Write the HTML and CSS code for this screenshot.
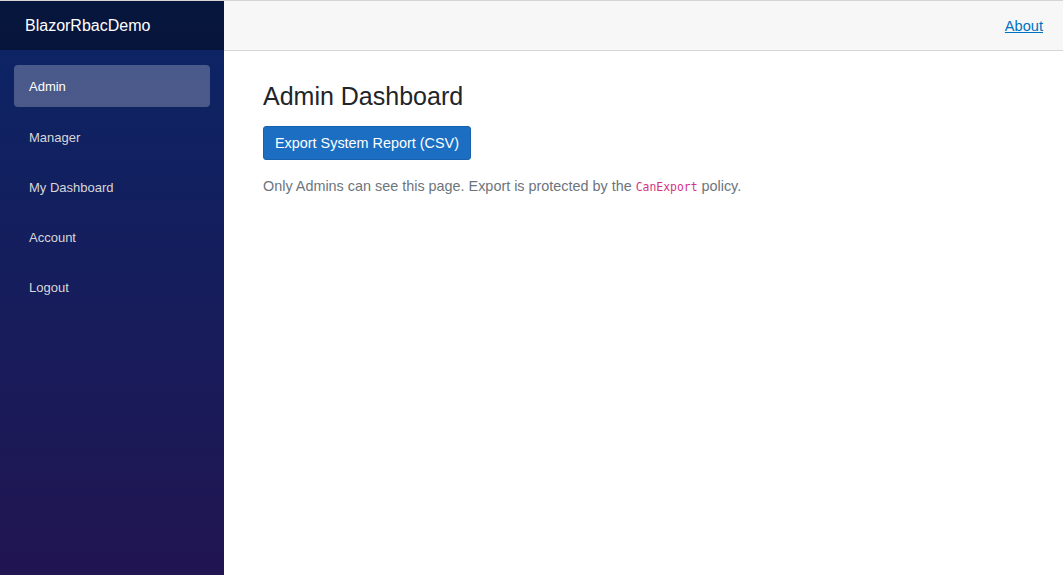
FILE: index.html
```html
<!DOCTYPE html>
<html lang="en">
<head>
<meta charset="utf-8">
<title>BlazorRbacDemo</title>
<link rel="stylesheet" href="styles.css">
</head>
<body>
<div class="page">
  <aside class="sidebar">
    <div class="brand-row"><span class="brand">BlazorRbacDemo</span></div>
    <nav class="nav">
      <a class="nav-link active" href="#">Admin</a>
      <a class="nav-link" href="#">Manager</a>
      <a class="nav-link" href="#">My Dashboard</a>
      <a class="nav-link" href="#">Account</a>
      <a class="nav-link" href="#">Logout</a>
    </nav>
  </aside>
  <main class="main">
    <div class="top-row"><a class="about" href="#">About</a></div>
    <article class="content">
      <h3 class="title">Admin Dashboard</h3>
      <button class="btn-primary" type="button">Export System Report (CSV)</button>
      <p class="note">Only Admins can see this page. Export is protected by the <code>CanExport</code> policy.</p>
    </article>
  </main>
</div>
</body>
</html>
```

FILE: styles.css
```css
html, body {
  margin: 0;
  padding: 0;
  height: 100%;
  font-family: "Liberation Sans", Arial, sans-serif;
}
body {
  border-top: 1px solid #d6d5d5;
  box-sizing: border-box;
}
.page {
  display: flex;
  height: 100%;
}
.sidebar {
  width: 224px;
  flex-shrink: 0;
  background: linear-gradient(180deg, #0b2566 0%, #211552 100%);
}
.brand-row {
  height: 49px;
  background: rgba(0, 0, 0, 0.4);
  display: flex;
  align-items: center;
  padding-left: 25px;
}
.brand {
  color: #fff;
  font-size: 16px;
}
.nav {
  display: flex;
  flex-direction: column;
  gap: 8px;
  padding: 15px 14px 0 14px;
}
.nav-link {
  display: flex;
  align-items: center;
  height: 42px;
  padding-left: 15px;
  border-radius: 4px;
  color: #d7d7d7;
  font-size: 13px;
  text-decoration: none;
}
.nav-link.active {
  background: rgba(255, 255, 255, 0.25);
  color: #fff;
  margin-bottom: 1px;
}
.main {
  flex: 1;
  display: flex;
  flex-direction: column;
}
.top-row {
  height: 49px;
  background: #f7f7f7;
  border-bottom: 1px solid #d6d5d5;
  display: flex;
  align-items: center;
  justify-content: flex-end;
  padding-right: 20px;
}
.about {
  color: #0071c1;
  font-size: 14.6px;
  text-decoration: underline;
}
.content {
  padding: 30px 39px 0 39px;
}
.title {
  margin: 0 0 15px 0;
  font-size: 25px;
  font-weight: 400;
  color: #212529;
  line-height: 1.2;
}
.btn-primary {
  display: block;
  height: 34px;
  padding: 0 11px;
  background: #1b6ec2;
  border: 1px solid #1861ac;
  border-radius: 3px;
  color: #fff;
  font-family: "Liberation Sans", Arial, sans-serif;
  font-size: 14.4px;
}
.note {
  margin: 16px 0 0 0;
  color: #6c757d;
  font-size: 14.4px;
  line-height: 1.5;
}
code {
  font-family: "DejaVu Sans Mono", monospace;
  font-size: 11.4px;
  color: #d63384;
}
```
